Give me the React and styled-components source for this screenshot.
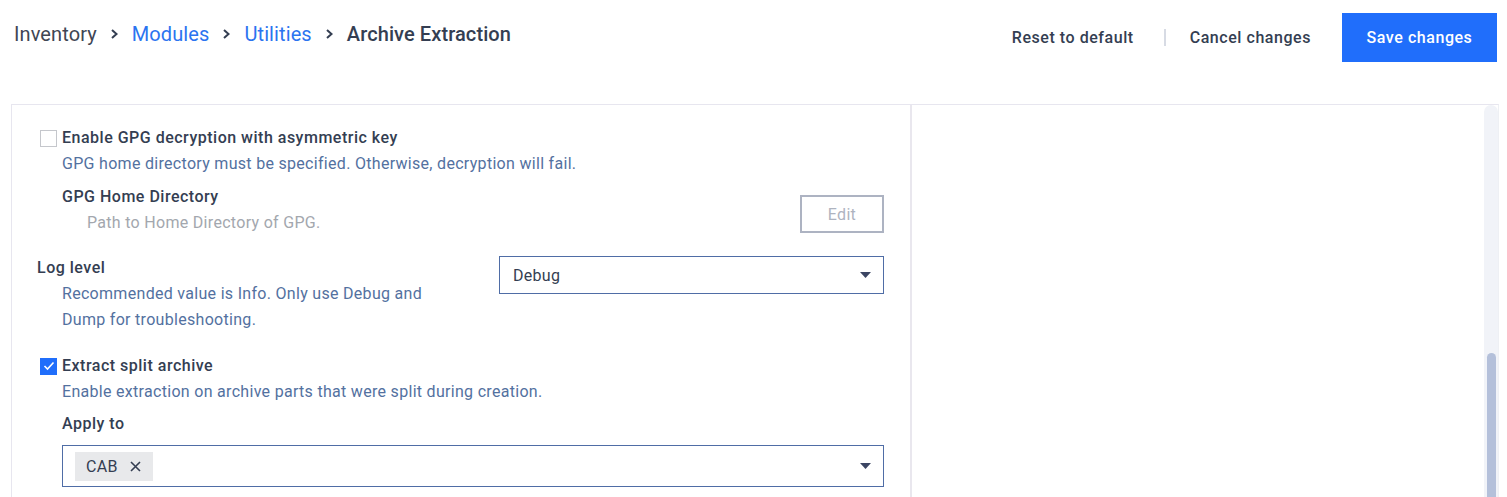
import React from "react";
import styled, { createGlobalStyle } from "styled-components";

const GlobalStyle = createGlobalStyle`
  html, body {
    margin: 0;
    padding: 0;
    background: #ffffff;
  }
  body {
    font-family: Roboto, "Noto Sans", "Liberation Sans", sans-serif;
    color: #343e52;
    -webkit-font-smoothing: antialiased;
  }
`;

const Page = styled.div`
  height: 497px;
  overflow: hidden;
  display: flex;
  flex-direction: column;
`;

const Header = styled.header`
  height: 104px;
  flex-shrink: 0;
  display: flex;
  justify-content: space-between;
  align-items: flex-start;
  padding: 0 10px 0 14px;
  box-sizing: border-box;
`;

const Crumbs = styled.nav`
  display: flex;
  align-items: center;
  gap: 12px;
  height: 22px;
  margin-top: 23px;
  font-size: 20px;
  line-height: 22px;
`;

const Crumb = styled.span`
  color: ${(p) => (p.$link ? "#2b74f0" : p.$current ? "#343e52" : "#3f4654")};
  font-weight: ${(p) => (p.$current ? 500 : 400)};
  letter-spacing: 0.1px;
  cursor: ${(p) => (p.$link ? "pointer" : "default")};
`;

const Chevron = () => (
  <svg width="11" height="12" viewBox="0 0 11 12">
    <polyline points="3,2 7.5,6 3,10" fill="none" stroke="#343e52" strokeWidth="2" />
  </svg>
);

const Actions = styled.div`
  display: flex;
  align-items: center;
  margin-top: 13px;
  height: 49px;
`;

const TextButton = styled.button`
  border: none;
  background: none;
  font-family: inherit;
  font-size: 16px;
  font-weight: 500;
  letter-spacing: 0.55px;
  color: #343e52;
  padding: 0;
  cursor: pointer;
`;

const Divider = styled.span`
  width: 2px;
  height: 17px;
  background: #d7dbe4;
  margin: 0 24px 0 30px;
`;

const PrimaryButton = styled.button`
  border: none;
  background: #206efb;
  color: #ffffff;
  font-family: inherit;
  font-size: 16px;
  font-weight: 500;
  letter-spacing: 0.55px;
  width: 155px;
  height: 49px;
  margin-left: 31px;
  cursor: pointer;
`;

const Panel = styled.section`
  flex: 1;
  display: flex;
  margin: 0 8px 0 11px;
  border-top: 1px solid #e7e6ef;
  border-left: 1px solid #e7e6ef;
  border-right: 1px solid #eef0f4;
  min-height: 0;
`;

const FormColumn = styled.div`
  width: 900px;
  flex-shrink: 0;
  border-right: 2px solid #e9e7ee;
  padding: 22px 26px 0 25px;
  box-sizing: border-box;
`;

const EmptyColumn = styled.div`
  flex: 1;
`;

const ScrollTrack = styled.div`
  width: 14px;
  flex-shrink: 0;
  background: #f1f3f8;
  border-radius: 7px 7px 0 0;
  display: flex;
  flex-direction: column;
  justify-content: flex-end;
  align-items: center;
`;

const ScrollThumb = styled.div`
  width: 9px;
  height: 144px;
  background: #b4c0da;
  border-radius: 5px 5px 0 0;
`;

const Field = styled.div`
  margin-top: ${(p) => p.$gap || 0}px;
`;

const CheckRow = styled.label`
  display: flex;
  align-items: center;
  gap: 5px;
  margin-left: 3px;
`;

const Box = styled.span`
  width: 17px;
  height: 17px;
  box-sizing: border-box;
  border: ${(p) => (p.$checked ? "none" : "1px solid #c5c7cc")};
  background: ${(p) => (p.$checked ? "#206efb" : "#ffffff")};
  display: flex;
  align-items: center;
  justify-content: center;
`;

const Title = styled.div`
  font-size: 16px;
  font-weight: 500;
  letter-spacing: 0.5px;
  line-height: 22px;
  color: #343e52;
  padding-left: ${(p) => p.$indent || 0}px;
  margin-top: ${(p) => p.$top || 0}px;
`;

const Hint = styled.div`
  font-size: 16px;
  letter-spacing: 0.3px;
  line-height: 26px;
  margin-top: 2px;
  color: ${(p) => (p.$muted ? "#a3a7ae" : "#53719f")};
  padding-left: ${(p) => p.$indent || 25}px;
  max-width: ${(p) => (p.$narrow ? "380px" : "none")};
`;

const SplitRow = styled.div`
  display: flex;
  justify-content: space-between;
  align-items: flex-start;
  padding-left: ${(p) => p.$indent || 0}px;
`;

const EditButton = styled.button`
  width: 84px;
  height: 38px;
  margin-top: 9px;
  border: 2px solid #adb3c2;
  background: #ffffff;
  color: #aeb3bf;
  font-family: inherit;
  font-size: 16px;
  letter-spacing: 0.3px;
  cursor: default;
`;

const Select = styled.div`
  width: ${(p) => p.$width || "385px"};
  height: ${(p) => p.$height || 38}px;
  box-sizing: border-box;
  border: 1px solid #4f6da6;
  display: flex;
  align-items: center;
  justify-content: space-between;
  padding: 0 12px 0 ${(p) => p.$padLeft || 13}px;
  font-size: 16px;
  letter-spacing: 0.3px;
  color: #343e52;
  margin-top: ${(p) => p.$top || 0}px;
`;

const Caret = () => (
  <svg width="11" height="6" viewBox="0 0 11 6">
    <polygon points="0,0 11,0 5.5,6" fill="#3b4563" />
  </svg>
);

const Chip = styled.span`
  display: inline-flex;
  align-items: center;
  gap: 12px;
  height: 29px;
  padding: 0 12px 0 11px;
  background: #e8e9eb;
  font-size: 16px;
  color: #343e52;
`;

const ChipClose = () => (
  <svg width="11" height="11" viewBox="0 0 11 11">
    <path d="M1 1L10 10M10 1L1 10" stroke="#343e52" strokeWidth="1.6" />
  </svg>
);

const Check = () => (
  <svg width="12" height="10" viewBox="0 0 12 10">
    <polyline points="1.5,5 4.5,8 10.5,1.5" fill="none" stroke="#ffffff" strokeWidth="1.6" />
  </svg>
);

export default function App() {
  return (
    <Page>
      <GlobalStyle />
      <Header>
        <Crumbs>
          <Crumb>Inventory</Crumb>
          <Chevron />
          <Crumb $link>Modules</Crumb>
          <Chevron />
          <Crumb $link>Utilities</Crumb>
          <Chevron />
          <Crumb $current>Archive Extraction</Crumb>
        </Crumbs>
        <Actions>
          <TextButton>Reset to default</TextButton>
          <Divider />
          <TextButton>Cancel changes</TextButton>
          <PrimaryButton>Save changes</PrimaryButton>
        </Actions>
      </Header>

      <Panel>
        <FormColumn>
          <Field>
            <CheckRow>
              <Box />
              <Title>Enable GPG decryption with asymmetric key</Title>
            </CheckRow>
            <Hint>GPG home directory must be specified. Otherwise, decryption will fail.</Hint>
          </Field>

          <Field $gap={9}>
            <SplitRow>
              <div>
                <Title $indent={25}>GPG Home Directory</Title>
                <Hint $muted $indent={50}>Path to Home Directory of GPG.</Hint>
              </div>
              <EditButton>Edit</EditButton>
            </SplitRow>
          </Field>

          <Field $gap={21}>
            <SplitRow>
              <div>
                <Title>Log level</Title>
                <Hint $narrow>Recommended value is Info. Only use Debug and Dump for troubleshooting.</Hint>
              </div>
              <Select $top={-1}>
                <span>Debug</span>
                <Caret />
              </Select>
            </SplitRow>
          </Field>

          <Field $gap={22}>
            <CheckRow>
              <Box $checked>
                <Check />
              </Box>
              <Title>Extract split archive</Title>
            </CheckRow>
            <Hint>Enable extraction on archive parts that were split during creation.</Hint>
            <Title $indent={25} $top={8}>Apply to</Title>
            <SplitRow $indent={25}>
              <Select $width="822px" $height={42} $padLeft={12} $top={10}>
                <Chip>
                  CAB
                  <ChipClose />
                </Chip>
                <Caret />
              </Select>
            </SplitRow>
          </Field>
        </FormColumn>
        <EmptyColumn />
        <ScrollTrack>
          <ScrollThumb />
        </ScrollTrack>
      </Panel>
    </Page>
  );
}
